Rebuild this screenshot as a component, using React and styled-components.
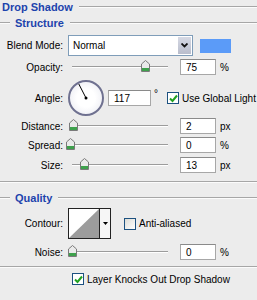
import styled, { createGlobalStyle } from "styled-components";

const GlobalStyle = createGlobalStyle`
  html, body {
    margin: 0;
    padding: 0;
    background: #ececec;
  }
  body {
    font-family: "Liberation Sans", Arial, sans-serif;
  }
`;

const Panel = styled.div`
  width: 257px;
  height: 300px;
  background: #ececec;
  font-size: 10px;
  color: #000;
  overflow: hidden;
`;

const Heading = styled.div`
  display: flex;
  align-items: center;
  height: 14px;
  margin-top: ${(p) => p.$top || 0}px;
  padding-left: ${(p) => p.$indent || 0}px;
  font: bold 11px "Liberation Sans", Arial, sans-serif;
  color: #1d43ad;
  span {
    margin: 0 6px 0 5px;
  }
`;

const Rule = styled.div`
  height: 0;
  border-top: 1px solid #a6a6a6;
  border-bottom: 1px solid #fbfbfb;
  flex: ${(p) => (p.$w ? `0 0 ${p.$w}px` : "1")};
  margin-top: ${(p) => p.$top || 0}px;
`;

const Row = styled.div`
  display: flex;
  align-items: center;
  height: ${(p) => p.$h || 16}px;
  margin-top: ${(p) => p.$top || 0}px;
  padding-left: ${(p) => p.$indent || 0}px;
`;

const Label = styled.div`
  width: 63px;
  flex: 0 0 63px;
  text-align: right;
  margin-right: 5px;
  white-space: nowrap;
`;

const Select = styled.div`
  width: 125px;
  height: 21px;
  box-sizing: border-box;
  border: 1px solid #7f9db9;
  background: #fff;
  display: flex;
  align-items: center;
  padding: 1px;
  span {
    flex: 1;
    padding-left: 3px;
  }
`;

const DropBtn = styled.div`
  width: 13px;
  height: 17px;
  background: linear-gradient(#d6d9e4, #b9bdcc);
  display: flex;
  align-items: center;
  justify-content: center;
`;

const Swatch = styled.div`
  width: 31px;
  height: 14px;
  margin-left: 7px;
  background: #5b9bf8;
`;

const SliderBox = styled.div`
  position: relative;
  width: 96px;
  height: 16px;
  padding: 0 4px;
  margin-right: 8px;
`;

const Track = styled.div`
  position: absolute;
  left: 4px;
  right: 4px;
  top: 7px;
  height: 0;
  border-top: 1px solid #9c9c9c;
  border-bottom: 1px solid #fff;
`;

const Thumb = styled.svg`
  position: absolute;
  top: 1px;
  width: 9px;
  height: 12px;
`;

const Field = styled.div`
  width: ${(p) => p.$w || 36}px;
  height: 16px;
  box-sizing: border-box;
  border: 1px solid #a7a7a7;
  border-top-color: #8a8a8a;
  background: #fff;
  padding: 2px 0 0 5px;
  line-height: 12px;
`;

const Unit = styled.div`
  margin-left: 4px;
`;

const Degree = styled(Unit)`
  margin-left: 3px;
  align-self: flex-start;
  margin-top: 8px;
`;

const Dial = styled.div`
  width: 36px;
  height: 36px;
  box-sizing: border-box;
  border: 2px solid #6f7190;
  border-radius: 50%;
  background: radial-gradient(circle at 50% 50%, #ffffff 40%, #e6e7ef 100%);
  margin-right: 4px;
  svg {
    display: block;
  }
`;

const Box = styled.div`
  width: 12px;
  height: 12px;
  box-sizing: border-box;
  border: 1px solid #1c5180;
  background: ${(p) =>
    p.$on ? "#fff" : "linear-gradient(135deg, #dcdcd6, #ffffff)"};
  margin-left: ${(p) => p.$left || 0}px;
  margin-right: 3px;
  display: flex;
  align-items: center;
  justify-content: center;
`;

const Contour = styled.div`
  width: 43px;
  height: 31px;
  box-sizing: border-box;
  border: 1px solid #222;
  display: flex;
  background: #fff;
`;

const ContourArrow = styled.div`
  flex: 1;
  border-left: 1px solid #222;
  display: flex;
  align-items: center;
  justify-content: center;
  background: #f6f6f6;
`;

function Slider({ pos }) {
  // thumb centre sits at pos% of the 96px track
  const left = 4 + (pos / 100) * 96 - 4.5;
  return (
    <SliderBox>
      <Track />
      <Thumb viewBox="0 0 9 12" style={{ left }}>
        <path d="M4.5 0.5 L8.5 4 L8.5 11.5 L0.5 11.5 L0.5 4 Z" fill="#eaeaea" stroke="#7a7a7a" />
        <rect x="1" y="8" width="7" height="3" fill="#3ea14c" />
      </Thumb>
    </SliderBox>
  );
}

function Check() {
  return (
    <svg width="9" height="9" viewBox="0 0 9 9">
      <path d="M1 4.5 L3.5 7 L8 1.5" fill="none" stroke="#21a121" strokeWidth="2" />
    </svg>
  );
}

function SliderRow({ label, pos, value, unit, top }) {
  return (
    <Row $top={top}>
      <Label>{label}</Label>
      <Slider pos={pos} />
      <Field>{value}</Field>
      <Unit>{unit}</Unit>
    </Row>
  );
}

export default function App() {
  return (
    <Panel>
      <GlobalStyle />
      <Heading $indent={2}>
        Drop Shadow
        <Rule style={{ marginLeft: 6 }} />
      </Heading>
      <Heading $top={2}>
        <Rule $w={10} />
        <span>Structure</span>
        <Rule />
      </Heading>

      <Row $h={21} $top={5}>
        <Label>Blend Mode:</Label>
        <Select>
          <span>Normal</span>
          <DropBtn>
            <svg width="7" height="5" viewBox="0 0 7 5">
              <path d="M0.5 0.5 L3.5 3.5 L6.5 0.5" fill="none" stroke="#111" strokeWidth="1.8" />
            </svg>
          </DropBtn>
        </Select>
        <Swatch />
      </Row>

      <SliderRow label="Opacity:" pos={77} value="75" unit="%" top={3} />

      <Row $h={36} $top={5}>
        <Label>Angle:</Label>
        <Dial>
          <svg width="32" height="32" viewBox="0 0 32 32">
            <line x1="16" y1="16" x2="8.8" y2="2" stroke="#000" strokeWidth="1" />
            <circle cx="16" cy="16" r="1.5" fill="#000" />
          </svg>
        </Dial>
        <Field $w={43}>117</Field>
        <Degree>°</Degree>
        <Box $on $left={9}>
          <Check />
        </Box>
        <span>Use Global Light</span>
      </Row>

      <SliderRow label="Distance:" pos={2} value="2" unit="px" top={2} />
      <SliderRow label="Spread:" pos={-2} value="0" unit="%" top={3} />
      <SliderRow label="Size:" pos={12.5} value="13" unit="px" top={4} />

      <Rule $top={8} />

      <Heading $top={8}>
        <Rule $w={10} />
        <span>Quality</span>
        <Rule />
      </Heading>

      <Row $h={31} $top={3}>
        <Label>Contour:</Label>
        <Contour>
          <svg width="30" height="29" viewBox="0 0 30 29">
            <path d="M0 29 L30 0 L30 29 Z" fill="#9c9c9c" />
          </svg>
          <ContourArrow>
            <svg width="5" height="3" viewBox="0 0 5 3">
              <path d="M0 0 L5 0 L2.5 3 Z" fill="#000" />
            </svg>
          </ContourArrow>
        </Contour>
        <Box $left={13} />
        <span>Anti-aliased</span>
      </Row>

      <SliderRow label="Noise:" pos={0} value="0" unit="%" top={5} />

      <Rule $top={6} />

      <Row $h={14} $top={4} $indent={72}>
        <Box $on>
          <Check />
        </Box>
        <span>Layer Knocks Out Drop Shadow</span>
      </Row>
    </Panel>
  );
}
